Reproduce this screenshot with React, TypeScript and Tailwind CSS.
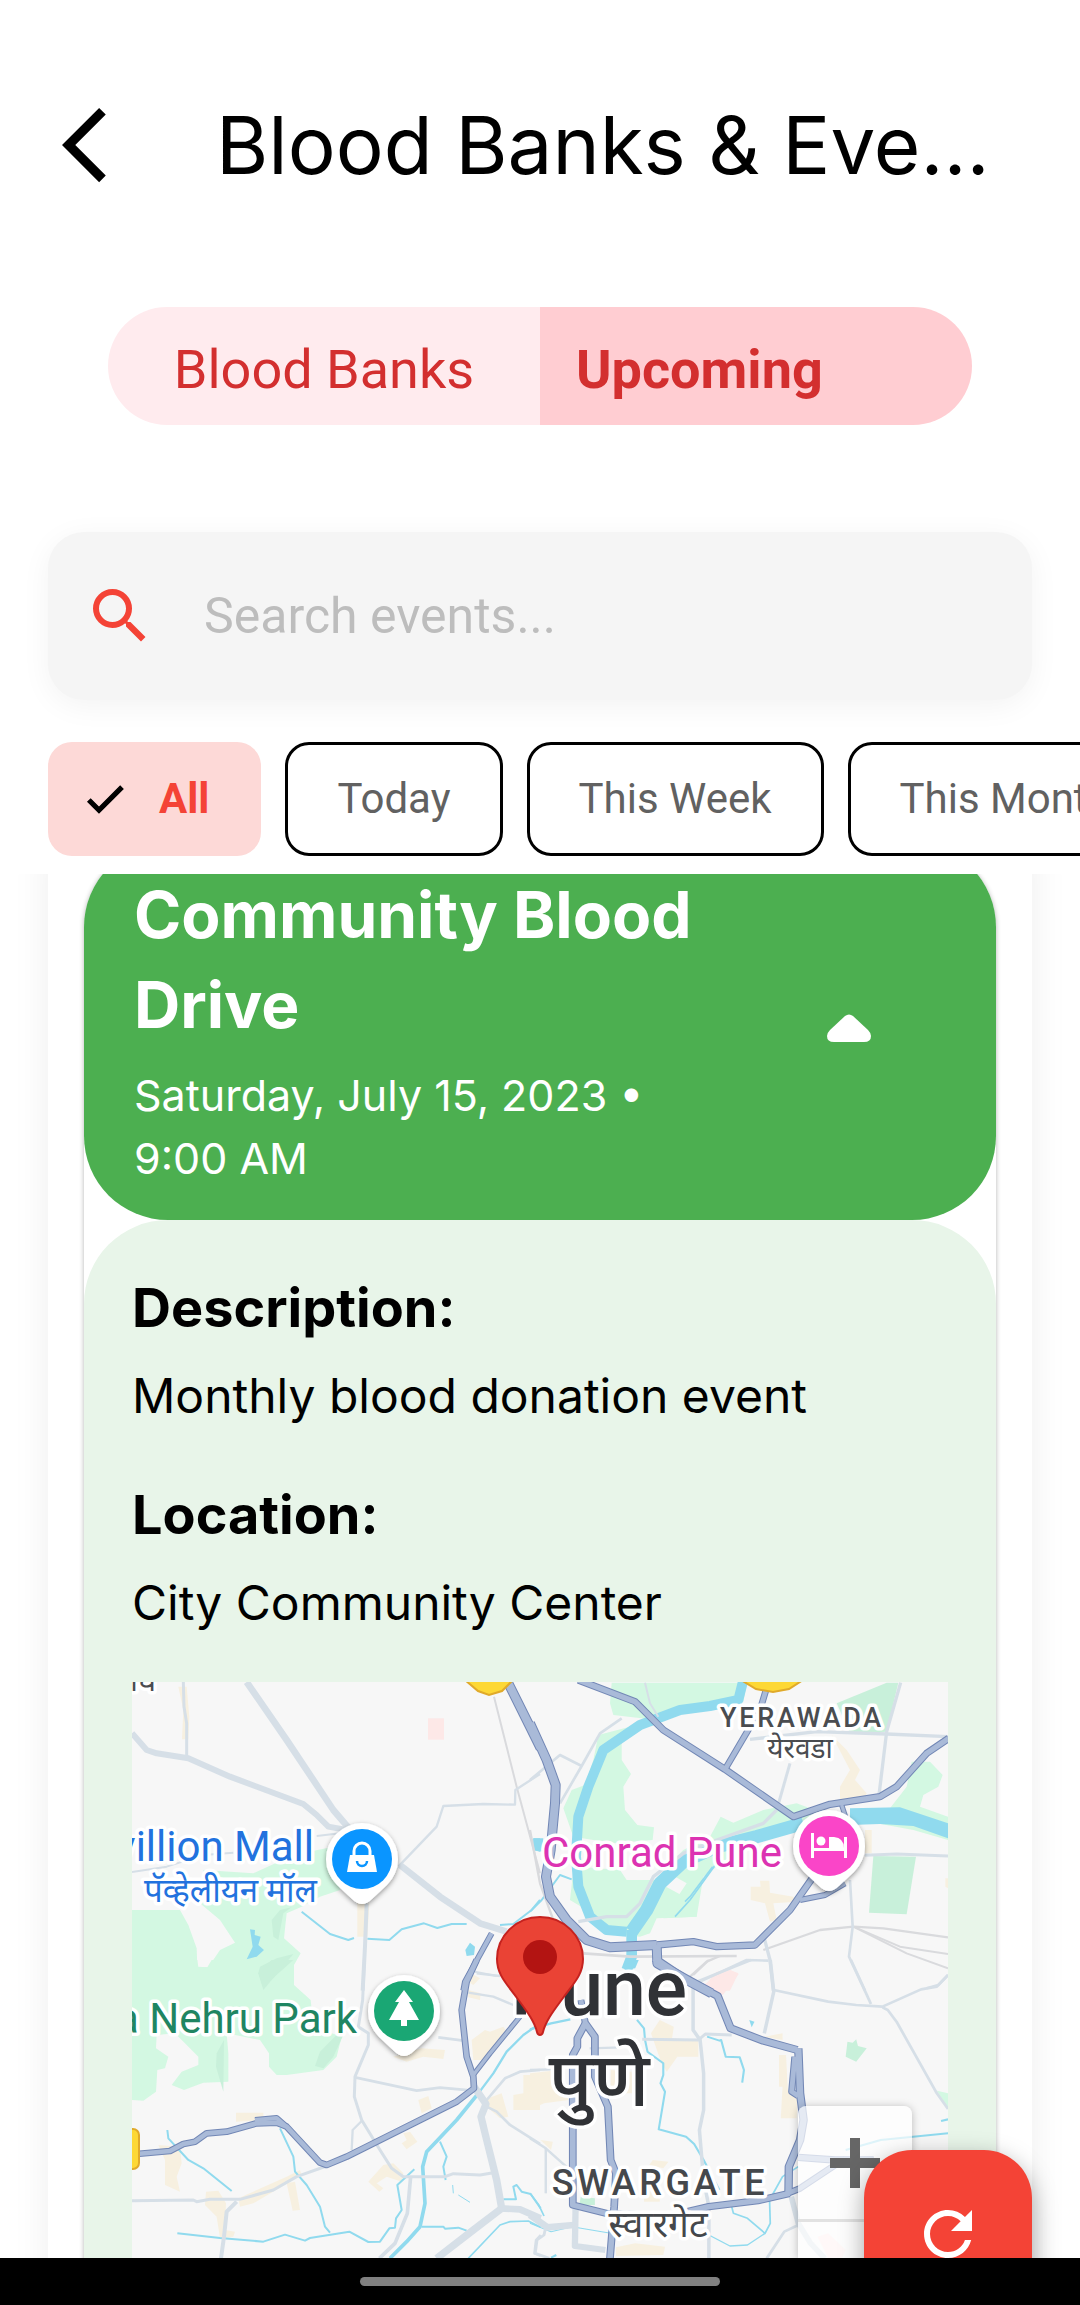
import React from "react";

type Line = [points: string, width: number];

interface Sheet {
  transform: string;
  parks: string[];
  woods: string[];
  sand: string[];
  pink: string[];
  lakes: string[];
  rivers: Line[];
  rails: Line[];
  roads: Line[];
  highways: Line[];
}

// The map is stored as four sheets, each with its own local grid.
const sheets: Sheet[] = [
  {
    transform: "matrix(0.33333 0 0 0.33333 -12 -12)",
    parks: [
      "36,720 180,720 205,765 230,835 232,890 265,892 300,840 345,818 300,750 240,700 250,600 400,610 520,555 640,530 660,660 600,680 545,710 500,730 492,805 542,850 522,885 522,962 36,962",
    ],
    woods: [
      "480,720 455,750 460,800 475,810 490,730 515,712",
      "420,890 470,865 520,852 480,900 430,960 415,910",
    ],
    sand: ["175,50 200,50 208,140 205,208 186,208 190,120", "712,700 748,700 742,800 712,800"],
    pink: ["924,145 972,145 972,209 924,209"],
    lakes: [
      "390,778 405,780 404,795 422,800 415,825 432,840 410,860 380,868 398,830",
      "1050,818 1065,830 1062,855 1040,858 1036,840",
      "1240,505 1260,505 1260,545 1240,540",
    ],
    rivers: [
      ["545,725 630,792 685,810 702,804", 6],
      ["742,806 808,810 845,778 912,760 952,774 995,762 1040,762", 6],
      ["1140,765 1180,762 1235,720 1260,690", 6],
    ],
    rails: [["1122,80 1190,350 1260,610", 6]],
    roads: [
      ["36,190 80,240 110,250 205,265 330,320 550,402 590,435 625,470 680,480", 18],
      ["380,36 500,210 640,420 700,490", 20],
      ["840,585 960,680 1080,760 1160,785", 20],
      ["190,36 192,110 200,160 200,260", 9],
      ["835,590 950,470 970,408 1090,402 1185,404 1186,360 1260,312", 7],
      ["740,700 735,830 728,962", 12],
      ["590,498 660,490", 6],
      ["36,606 140,590 250,555 340,548", 6],
      ["1065,905 1130,918", 6],
    ],
    highways: [
      ["1165,40 1230,170 1262,235", 30],
      ["1115,790 1035,935 1030,962", 18],
    ],
  },
  {
    transform: "matrix(0.33333 0 0 0.33333 398 -12)",
    parks: [
      "245,38 650,38 640,95 520,105 400,130 380,150 250,135 240,100",
      "205,195 300,170 330,165 275,215 275,270 303,312 280,350 285,420 322,465 372,472 368,510 250,520 130,500 100,415 125,360 165,345 190,270",
      "150,590 270,600 290,630 370,630 500,700 500,740 380,745 360,790 330,800 220,790 200,760 170,720 120,690 130,600",
      "460,540 540,500 572,440 610,458 700,420 800,400 880,430 870,460 700,500 600,560 520,620 500,740 400,745 470,640 400,600",
      "1080,415 1130,350 1145,275 1200,275 1238,315 1225,350 1180,375 1170,410 1254,440 1254,510 1150,480 1040,460",
    ],
    woods: ["920,100 1070,38 1105,38 1070,185 960,190", "1030,558 1158,560 1130,733 1017,728"],
    sand: [
      "905,195 950,240 990,300 975,330 1010,370 1005,385 930,390 930,350 960,300",
      "690,632 718,632 720,668 790,680 800,695 730,700 740,750 720,755 705,700 662,690 662,650 692,650",
      "1005,480 1025,480 1025,550 1005,550",
      "1246,625 1254,625 1254,655 1246,650",
    ],
    pink: ["530,940 560,905 600,900 625,910 600,962 530,962"],
    lakes: ["10,505 40,505 35,545 10,540", "960,415 1110,412 1254,460 1254,505 1150,468 1050,462 960,465"],
    rivers: [
      ["640,30 625,90 540,108 450,120 330,165 220,240 175,350 145,440 138,560 145,650 180,740 230,780 290,785", 30],
      ["305,785 350,720 390,640 460,575 560,530 680,500 820,460", 40],
      ["305,780 305,860 290,900", 32],
      ["548,590 480,680 465,695", 5],
      ["558,582 480,690 435,740", 5],
      ["0,725 35,690 90,615 125,628", 6],
    ],
    rails: [
      ["160,850 300,860 620,858", 8],
      ["700,840 870,780 970,770 1060,775 1254,802", 7],
      ["970,770 1110,830 1254,852", 6],
      ["970,770 1130,850 1254,895", 6],
      ["0,480 30,640 70,750", 7],
      ["480,920 530,875 570,858", 7],
    ],
    roads: [
      ["1112,38 1070,185 1047,375", 10],
      ["660,208 860,185 1070,192 1254,200", 10],
      ["780,280 740,420", 9],
      ["0,330 90,255 155,288", 8],
      ["275,145 210,190 155,288 90,400", 8],
      ["345,38 360,100 385,140", 6],
      ["740,420 700,460 560,510 460,550 370,620 330,700 290,740 230,740 145,755", 10],
      ["1005,556 1100,552 1254,558", 9],
      ["960,630 968,770 957,860 1005,962", 8],
      ["703,805 720,870 730,962", 10],
      ["510,935 650,870 715,872", 8],
      ["1190,955 1225,945 1254,915", 8],
    ],
    highways: [
      ["0,160 50,270 77,345 75,400 62,540 48,620 60,680 110,750 170,810 240,832 380,825", 30],
      ["380,825 490,815 560,830 675,825 780,720 850,620", 22],
      ["145,30 315,95 400,180 585,298 790,440 900,403 1050,380 1100,350 1190,250 1256,205", 22],
      ["708,60 690,120 585,298", 20],
      ["935,405 950,450", 16],
      ["810,690 885,675 945,640", 18],
      ["380,825 382,880 480,935 545,970", 30],
    ],
  },
  {
    transform: "matrix(0.33333 0 0 0.33333 -12 278)",
    parks: [
      "36,0 232,0 235,22 262,22 275,0 522,0 522,75 572,120 580,200 665,230 650,290 610,330 500,345 470,345 447,320 447,280 420,240 320,220 325,280 325,365 250,368 192,390 155,375 185,335 235,315 235,290 165,220 110,225 108,265 145,290 135,325 112,330 108,395 70,422 36,420",
    ],
    woods: [
      "455,0 520,0 430,80 415,40",
      "650,225 670,225 640,290 610,325 585,318 600,275",
      "290,280 312,240 310,395 288,320",
    ],
    sand: [
      "1095,210 1110,215 1150,200 1160,215 1100,300 1060,300 1055,240",
      "348,458 430,458 430,480 348,485",
      "115,555 180,560 185,610 170,650 180,695 135,675 135,600",
      "258,695 295,692 318,730 315,810 345,815 340,830 300,835 290,770 255,735",
      "355,715 500,650 540,630 545,645 400,730 360,740",
      "500,670 525,665 540,750 518,752",
      "790,615 820,610 850,640 845,665 800,650 770,670 790,685 778,695 745,665",
      "895,420 925,408 935,445 905,460",
      "850,520 870,515 892,545 860,568 845,550 860,540",
      "1090,420 1145,400 1165,470 1140,475 1100,440",
      "1210,345 1260,345 1260,450 1180,450 1180,405 1210,400",
      "820,290 905,265 975,270 970,297 910,290 860,305",
      "1050,38 1080,55 1060,75 1045,65",
      "1045,90 1082,100 1080,120 1045,112",
    ],
    pink: [],
    lakes: [],
    rivers: [
      ["142,510 145,535 205,600 250,625 335,693", 6],
      ["480,505 520,590 525,635 560,675 600,740 615,800 630,818", 6],
      ["172,820 300,834 430,845 495,824 555,842 570,834 688,815 745,846 780,845 808,805 825,803 828,775 845,750 832,675 883,628", 6],
      ["1075,400 1010,480 920,575 908,620 915,730 900,800 860,845 810,895", 11],
      ["1260,190 1210,225 1160,275 1120,340 1075,400", 7],
      ["960,545 980,590 970,620 977,660", 6],
      ["905,800 970,800 975,806 1015,803 1040,812", 6],
      ["1045,895 1140,795 1170,785 1225,783 1262,802", 5],
      ["1150,718 1188,718 1180,680 1190,675 1205,695 1232,702 1262,745", 6],
      ["998,675 1000,700", 3],
      ["1015,705 1050,727", 3],
    ],
    rails: [],
    roads: [
      ["733,0 728,120 715,200 745,220 745,255 705,350 703,410 725,480 780,570 815,625 850,650 975,650 1000,641 1080,645 1120,638", 9],
      ["705,352 890,392 960,383 1060,392", 8],
      ["955,232 1030,242", 8],
      ["1070,40 1140,48", 7],
      ["1045,98 1120,110 1180,135", 7],
      ["1062,380 1098,432 1083,470 1100,540 1130,660 1145,745", 22],
      ["1145,745 1060,810 950,895", 22],
      ["1140,745 1200,748 1262,775", 20],
      ["36,722 220,720 230,725 270,718 360,718 460,690 530,650 620,618", 9],
      ["350,725 320,755 312,830 303,895", 12],
      ["725,483 698,510 695,570", 7],
      ["872,650 862,760 825,850 778,895", 11],
      ["1100,420 1155,355 1200,335 1260,330", 8],
      ["1100,440 1130,455 1170,495 1260,552", 8],
      ["1262,825 1248,840 1243,880 1262,888", 7],
    ],
    highways: [
      ["50,582 150,573 190,552 225,545 260,520 320,515 410,490 470,488 500,500 600,608 620,615 680,590 1010,425 1062,385 1060,350 1040,290 1025,150 1040,65 1070,0", 20],
      ["405,480 470,474 500,500", 18],
      ["1060,345 1110,280 1200,170", 16],
    ],
  },
  {
    transform: "matrix(0.35075 0 0 0.33333 398 278)",
    parks: ["1160,392 1192,400 1192,445"],
    woods: ["905,245 920,248 930,238 935,258 960,265 930,305 900,290", "145,710 185,715 185,735 140,735"],
    sand: [
      "345,220 370,180 410,200 405,235 480,240 480,290 420,290 390,335 375,310",
      "710,285 730,285 735,390 765,400 760,475 715,475 720,380 710,380",
      "0,340 85,330 110,420 40,430 0,450",
      "350,600 395,605 380,625 340,615",
      "245,862 300,850 385,860 380,885 245,888",
      "30,540 65,545 60,570",
      "230,330 290,335 295,400 230,400",
      "325,690 370,690 370,725 325,725",
      "668,230 720,220 720,240",
    ],
    pink: ["495,75 570,30 595,42 550,105", "820,830 850,820 900,870 890,893 850,893"],
    lakes: ["275,0 310,0 300,25 270,30", "625,180 640,185 632,202"],
    rivers: [
      ["305,180 325,205 328,240 335,275 380,310 380,345 372,370 385,395 367,508 445,530 468,552 495,600 540,690", 6],
      ["505,230 540,242 545,240 558,290 598,292 610,330 605,368", 6],
      ["900,570 1000,540 1192,520", 6],
      ["1172,483 1192,478", 6],
      ["575,740 580,760 620,775 670,820 685,790 683,720 720,650 765,620", 5],
      ["0,700 25,735 40,768", 5],
      ["0,790 60,815 120,800 230,820", 3],
      ["510,825 570,858 620,855 670,820", 4],
      ["0,208 60,190 115,178", 7],
      ["75,885 60,893", 6],
    ],
    rails: [["465,45 510,0", 7]],
    roads: [
      ["465,80 465,210 485,240 495,340 495,450 483,510 495,660 510,740 510,895", 10],
      ["320,238 480,240 500,222 575,225", 9],
      ["465,70 630,0", 8],
      ["685,0 695,95 668,220", 10],
      ["695,90 850,125 930,135 1005,140 1115,88 1160,80 1192,45", 8],
      ["915,0 972,132", 8],
      ["1005,142 1020,150 1045,185 1160,400 1192,447", 8],
      ["0,330 60,328", 7],
      ["0,535 45,565 125,640", 7],
      ["45,565 45,700", 7],
      ["0,765 50,802 125,795", 20],
      ["130,740 128,858 215,870", 18],
      ["45,800 40,825 20,840 15,880 55,895", 8],
      ["745,710 765,790 800,850 840,895", 16],
      ["675,895 725,815 765,795", 8],
      ["170,265 260,262", 7],
    ],
    highways: [
      ["355,-5 440,55 535,108 572,205 665,242 762,270", 24],
      ["765,265 770,400 780,480 770,540 738,620 737,700", 24],
      ["755,290 746,395 765,408", 20],
      ["765,592 870,600 980,600", 22],
      ["735,700 770,685 870,615 900,598", 20],
      ["740,700 650,722 510,740 440,757", 22],
      ["158,190 185,230 185,350 222,440 230,600 245,640 240,740 228,895", 22],
      ["158,190 135,235 135,260 122,285 122,735 225,762 330,765", 22],
      ["158,190 145,120", 20],
    ],
  },
];

function Areas({ pick, fill }: { pick: (s: Sheet) => string[]; fill: string }) {
  return (
    <>
      {sheets.map((s, i) => (
        <g key={i} transform={s.transform} fill={fill}>
          {pick(s).map((points) => (
            <polygon key={points} points={points} />
          ))}
        </g>
      ))}
    </>
  );
}

function Lines({ pick, stroke, inset = 0 }: { pick: (s: Sheet) => Line[]; stroke: string; inset?: number }) {
  return (
    <>
      {sheets.map((s, i) => (
        <g key={i} transform={s.transform} fill="none" stroke={stroke} strokeLinejoin="round">
          {pick(s).map(([points, width]) => (
            <polyline key={points} points={points} strokeWidth={width - inset} />
          ))}
        </g>
      ))}
    </>
  );
}

function PlacePin({ x, y, fill, children }: { x: number; y: number; fill: string; children: React.ReactNode }) {
  return (
    <g transform={`translate(${x} ${y})`}>
      <path d="M-25 26A36 36 0 1 1 25 26L10 40Q0 50-10 40Z" fill="#fff" filter="url(#pin-shadow)" />
      <circle r="30" fill={fill} />
      {children}
    </g>
  );
}

const label = "[paint-order:stroke] stroke-white [stroke-linejoin:round] font-['Roboto','Noto_Sans',sans-serif]";

function CityMap() {
  return (
    <svg
      viewBox="0 0 816 576"
      preserveAspectRatio="xMidYMin slice"
      role="img"
      aria-label="Map of Pune"
      className="block w-full"
    >
      <defs>
        <filter id="pin-shadow" x="-30%" y="-30%" width="160%" height="170%">
          <feDropShadow dx="0" dy="2" stdDeviation="2.5" floodOpacity="0.4" />
        </filter>
      </defs>
      <rect width="816" height="576" fill="#f7f7f7" />
      <Areas pick={(s) => s.parks} fill="#d3f8e2" />
      <Areas pick={(s) => s.woods} fill="#c8f0da" />
      <Areas pick={(s) => s.sand} fill="#f7f0e0" />
      <Areas pick={(s) => s.pink} fill="#fde8e7" />
      <Areas pick={(s) => s.lakes} fill="#90daee" />
      <Lines pick={(s) => s.rivers} stroke="#90daee" />
      <Lines pick={(s) => s.rails} stroke="#d9dadd" />
      <Lines pick={(s) => s.roads} stroke="#d6dfe7" />
      <Lines pick={(s) => s.highways} stroke="#7287b5" />
      <Lines pick={(s) => s.highways} stroke="#a9bad8" inset={6} />

      <g fill="#fdd835" stroke="#e0aa2a" strokeWidth="2">
        <path d="M333-2 346 9 357 13 370 9 381-2Z" />
        <path d="M609-2 624 7 641 10 657 7 671-2Z" />
        <rect x="-12" y="447" width="19" height="40" rx="6" />
      </g>

      <g className={label} strokeWidth="7">
        <text x="-5" y="9" fontSize="30" fill="#4a4c50">।घ</text>
        <text x="182" y="179" textAnchor="end" fontSize="42" fill="#2272de">villion Mall</text>
        <text x="185" y="220" textAnchor="end" fontSize="33" fill="#2272de">पॅव्हेलीयन मॉल</text>
        <text x="225" y="351" textAnchor="end" fontSize="42" fill="#1f8562">a Nehru Park</text>
        <text x="410" y="185" fontSize="42" fill="#dc33b2">Conrad Pune</text>
        <text x="670" y="45" textAnchor="middle" fontSize="27" fontWeight="500" fill="#4a4c50" className="tracking-widest">YERAWADA</text>
        <text x="668" y="76" textAnchor="middle" fontSize="28" fill="#4a4c50">येरवडा</text>
        <text x="528" y="513" textAnchor="middle" fontSize="36" fontWeight="500" fill="#45484c" className="tracking-widest">SWARGATE</text>
        <text x="526" y="555" textAnchor="middle" fontSize="37" fill="#45484c">स्वारगेट</text>
        <text x="379" y="333" fontSize="77" fontWeight="500" fill="#303236">Pune</text>
        <text x="467" y="424" textAnchor="middle" fontSize="76" fontWeight="500" fill="#303236">पुणे</text>
      </g>

      <PlacePin x={230} y={177} fill="#0a95ff">
        <path d="M-12-4H12L15 13H-15Z" fill="#fff" />
        <path d="M-8-4V-8a8 8 0 0 1 16 0v4" fill="none" stroke="#fff" strokeWidth="3" />
        <path d="M-5 2a5 5 0 0 0 10 0" fill="none" stroke="#0a95ff" strokeWidth="2.5" />
      </PlacePin>
      <PlacePin x={697} y={164} fill="#fa45c8">
        <path d="M-18-13h3V2H15V-9h3V12h-3V5H-15v7h-3Z" fill="#fff" />
        <circle cx="-8" cy="-5" r="4.5" fill="#fff" />
        <path d="M0-9H5Q15-8 15 2H0Z" fill="#fff" />
      </PlacePin>
      <PlacePin x={272} y={329} fill="#1aa774">
        <path d="M0-21 9-9H5L15 9H3v6H-3V9H-15L-5-9h-4Z" fill="#fff" />
      </PlacePin>

      <path
        d="M408 235c-24 0-43 19-43 42 0 16 10 25 20 39 8 11 17 22 20 34 1 4 5 4 6 0 3-12 12-23 20-34 10-14 20-23 20-39 0-23-19-42-43-42Z"
        fill="#ea4335"
        stroke="#c5221f"
        strokeWidth="2"
      />
      <circle cx="408" cy="275" r="17" fill="#b31412" />
    </svg>
  );
}

const chip =
  "flex h-[114px] shrink-0 items-center rounded-3xl border-3 border-black px-[49px] text-[42px] leading-[48px] text-[#616161]";

function Detail({ title, children }: { title: string; children: React.ReactNode }) {
  return (
    <section className="mb-[43px]">
      <h3 className="text-[54px] leading-[80px] font-bold">{title}</h3>
      <p className="mt-3 text-[48px] leading-[72px]">{children}</p>
    </section>
  );
}

export default function App() {
  return (
    <div className="flex h-screen flex-col overflow-hidden bg-white font-['Roboto',sans-serif] text-black">
      <header className="flex h-[190px] shrink-0 items-end pl-[62px]">
        <button aria-label="Back" className="shrink-0">
          <svg viewBox="0 0 24 24" className="size-[90px]" fill="currentColor">
            <path d="M11.67 3.87 9.9 2.1 0 12l9.9 9.9 1.77-1.77L3.54 12z" />
          </svg>
        </button>
        <h1 className="ml-[64px] text-[80px] leading-[90px] whitespace-nowrap font-['Inter',sans-serif]">
          Blood Banks &amp; Eve…
        </h1>
      </header>

      <div
        role="tablist"
        className="mx-[108px] mt-[117px] grid h-[118px] shrink-0 grid-cols-2 overflow-hidden rounded-full text-[54px] leading-[64px] text-[#d32f2f]"
      >
        <button role="tab" aria-selected="false" className="bg-[#ffebee] pt-2">
          Blood Banks
        </button>
        <button role="tab" aria-selected="true" className="bg-[#ffcdd2] pt-2 pl-9 text-left font-bold">
          Upcoming
        </button>
      </div>

      <label className="mx-[48px] mt-[107px] flex h-[168px] shrink-0 items-center rounded-[36px] bg-[#f5f5f5] pl-9 shadow-[0_6px_30px_rgba(0,0,0,0.05)]">
        <svg viewBox="0 0 24 24" className="size-[72px] shrink-0" fill="#f44336" aria-hidden="true">
          <path d="M15.5 14h-.79l-.28-.27A6.47 6.47 0 0 0 16 9.5 6.5 6.5 0 1 0 9.5 16c1.61 0 3.09-.59 4.23-1.57l.27.28v.79l5 4.99L20.49 19zm-6 0C7.01 14 5 11.99 5 9.5S7.01 5 9.5 5 14 7.01 14 9.5 11.99 14 9.5 14" />
        </svg>
        <input
          type="text"
          aria-label="Search events"
          placeholder="Search events..."
          className="ml-12 min-w-0 flex-1 bg-transparent text-[50px] leading-[60px] outline-none placeholder:text-[#bdbdbd]"
        />
      </label>

      <div className="mt-[42px] flex shrink-0 gap-6 overflow-hidden pl-[48px]">
        <button
          aria-pressed="true"
          className="flex h-[114px] shrink-0 items-center rounded-3xl bg-[#fdd9d7] pr-[52px] pl-[33px] text-[42px] leading-[48px] font-bold text-[#f44336]"
        >
          <svg viewBox="0 0 24 24" className="mr-[30px] size-[48px]" fill="#000" stroke="#000" strokeWidth="0.6" aria-hidden="true">
            <path d="M9 16.17 4.83 12l-1.42 1.41L9 19 21 7l-1.41-1.41z" />
          </svg>
          All
        </button>
        <button className={chip}>Today</button>
        <button className={chip}>This Week</button>
        <button className={chip}>This Month</button>
      </div>

      <main className="relative mt-[18px] min-h-0 flex-1 overflow-hidden font-['Inter',sans-serif]">
        <div className="mx-[48px] min-h-full bg-white px-9 shadow-[0_0_36px_rgba(0,0,0,0.07)]">
          <article className="-mt-[31px] rounded-[84px] bg-white shadow-[0_1px_5px_rgba(0,0,0,0.3)]">
            <div className="flex items-center rounded-[84px] bg-[#4caf50] px-[50px] pt-[27px] pb-[30px] text-white">
              <div className="flex-1">
                <h2 className="text-[64px] leading-[90px] font-bold">Community Blood Drive</h2>
                <p className="mt-[14px] text-[43px] leading-[63px]">
                  Saturday, July 15, 2023 • <span className="whitespace-nowrap">9:00 AM</span>
                </p>
              </div>
              <button aria-label="Collapse event" className="flex w-[194px] shrink-0 justify-center pb-1">
                <svg viewBox="0 0 44 28" className="w-[44px]" fill="currentColor">
                  <path d="M18 2Q22-1 26 2L41 16Q44 19 44 22 44 28 37 28H7Q0 28 0 22 0 19 3 16Z" />
                </svg>
              </button>
            </div>
            <div className="rounded-[84px] bg-[#e8f5e9] px-12 pt-12 pb-[180px]">
              <Detail title="Description:">Monthly blood donation event</Detail>
              <Detail title="Location:">City Community Center</Detail>
              <div className="relative">
                <CityMap />
                <div className="absolute right-9 bottom-0 w-[114px] rounded-t-lg bg-white/70 shadow-[0_1px_8px_rgba(0,0,0,0.25)]">
                  <button aria-label="Zoom in" className="flex h-[113px] w-full items-center justify-center">
                    <svg viewBox="0 0 50 50" className="size-[50px]" stroke="#666" strokeWidth="10">
                      <path d="M25 0V50M0 25H50" />
                    </svg>
                  </button>
                  <div className="h-[39px] border-t-3 border-[#e2e2e2]" />
                </div>
              </div>
            </div>
          </article>
        </div>

        <button
          aria-label="Refresh"
          className="absolute right-[48px] -bottom-[60px] flex size-[168px] items-center justify-center rounded-[48px] bg-[#f44336] shadow-[0_8px_24px_rgba(0,0,0,0.35)]"
        >
          <svg viewBox="0 0 24 24" className="size-[72px]" fill="#fff">
            <path d="M17.65 6.35A7.96 7.96 0 0 0 12 4c-4.42 0-7.99 3.58-7.99 8s3.57 8 7.99 8c3.73 0 6.84-2.55 7.73-6h-2.08A5.99 5.99 0 0 1 12 18c-3.31 0-6-2.69-6-6s2.69-6 6-6c1.66 0 3.14.69 4.22 1.78L13 11h7V4z" />
          </svg>
        </button>
      </main>

      <footer className="flex h-[47px] shrink-0 items-center justify-center bg-black">
        <div className="h-[9px] w-1/3 rounded-full bg-[#808080]" />
      </footer>
    </div>
  );
}
